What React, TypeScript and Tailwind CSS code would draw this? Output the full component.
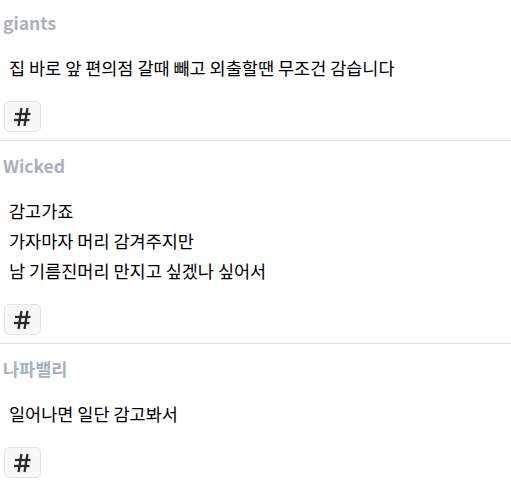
const posts = [
  {
    user: "giants",
    body: "집 바로 앞 편의점 갈때 빼고 외출할땐 무조건 감습니다",
  },
  {
    user: "Wicked",
    body: "감고가죠\n가자마자 머리 감겨주지만\n남 기름진머리 만지고 싶겠나 싶어서",
  },
  {
    user: "나파밸리",
    body: "일어나면 일단 감고봐서",
  },
];

const HashIcon = () => (
  <svg width="19" height="20" viewBox="0 0 19 20" fill="none">
    <g stroke="#2b2b2b" strokeWidth="2.3" strokeLinecap="butt">
      <path d="M8.5 1 L5.5 19" />
      <path d="M14.5 1 L11.5 19" />
      <path d="M2 7 L17.5 7" />
      <path d="M1 13 L16.5 13" />
    </g>
  </svg>
);

export default function App() {
  return (
    <div
      className="w-[511px] bg-white"
      style={{ fontFamily: '"Noto Sans CJK KR", "Noto Sans", sans-serif' }}
    >
      {posts.map((post, index) => (
        <div
          key={index}
          className={`border-b border-[#dedede] pb-[8px] ${
            index === 0 ? "pt-[11px]" : "pt-[13px]"
          }`}
        >
          <div className="pl-[3px] text-[17.5px] font-bold leading-[24px] text-[#aab1bb]">
            {post.user}
          </div>
          <div className="mt-[18px] whitespace-pre-line pl-[9px] text-[17.5px] leading-[30px] text-black">
            {post.body}
          </div>
          <div className="mt-[18px] pl-[4px]">
            <button className="flex h-[31px] w-[37px] items-center justify-center rounded-[5px] border border-[#e3e3e3] bg-[#f8f8f8]">
              <HashIcon />
            </button>
          </div>
        </div>
      ))}
    </div>
  );
}
